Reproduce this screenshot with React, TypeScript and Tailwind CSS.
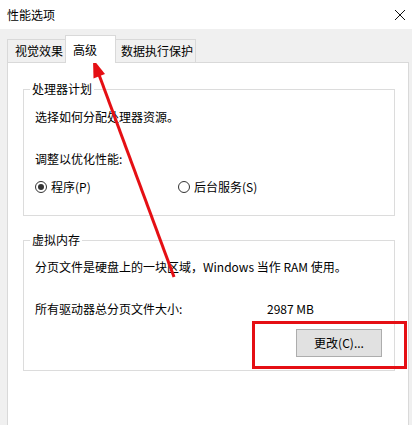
import React from "react";

const font = { fontFamily: '"Microsoft YaHei UI", "Noto Sans CJK SC", "Noto Sans", sans-serif' };

function Radio({ checked, label }: { checked?: boolean; label: string }) {
  return (
    <div className="flex items-center h-[16px]">
      <span className="w-[12px] h-[12px] rounded-full border border-[#333333] bg-white flex items-center justify-center">
        {checked && <span className="w-[6px] h-[6px] rounded-full bg-[#333333]" />}
      </span>
      <span className="ml-[4px]">{label}</span>
    </div>
  );
}

export default function App() {
  return (
    <div
      className="relative w-[412px] h-[425px] overflow-hidden bg-[#f0f0f0] text-[12px] leading-[16px] text-[#000000]"
      style={font}
    >
      {/* Title bar */}
      <div className="h-[29px] bg-white flex items-center justify-between pl-[7px] pr-[5px]">
        <span className="text-[12px]">性能选项</span>
        <svg width="12" height="12" viewBox="0 0 12 12" className="mr-[1px]">
          <path d="M1 1 L11 11 M11 1 L1 11" stroke="#111" strokeWidth="1" />
        </svg>
      </div>

      {/* Tabs */}
      <div className="flex items-end h-[33px] pl-[7px]">
        <div className="w-[59px] h-[23px] border border-b-0 border-[#d9d9d9] bg-[#f0f0f0] flex items-center pl-[7px] mb-0">
          视觉效果
        </div>
        <div className="relative z-10 -mb-[1px] w-[51px] h-[28px] border border-b-0 border-[#d9d9d9] bg-white flex items-start pt-[6px] pl-[7px] -ml-[1px]">
          高级
        </div>
        <div className="w-[80px] h-[23px] border border-b-0 border-l-0 border-[#d9d9d9] bg-[#f0f0f0] flex items-center pl-[5px]">
          数据执行保护
        </div>
      </div>

      {/* Panel */}
      <div className="ml-[7px] w-[402px] h-[400px] border border-[#d9d9d9] bg-white pt-[26px] pl-[15px]">
        {/* Group 1 */}
        <div className="relative w-[372px] h-[127px] border border-[#dcdcdc] pl-[11px] pt-[19px]">
          <span className="absolute -top-[9px] left-[6px] px-[2px] bg-white">处理器计划</span>
          <div>选择如何分配处理器资源。</div>
          <div className="mt-[26px]">调整以优化性能:</div>
          <div className="mt-[12px] flex">
            <div className="w-[143px]">
              <Radio checked label="程序(P)" />
            </div>
            <Radio label="后台服务(S)" />
          </div>
        </div>

        {/* Group 2 */}
        <div className="relative mt-[24px] w-[372px] h-[131px] border border-[#dcdcdc] pl-[11px] pt-[18px] pr-[12px]">
          <span className="absolute -top-[9px] left-[6px] px-[2px] bg-white">虚拟内存</span>
          <div>分页文件是硬盘上的一块区域，Windows 当作 RAM 使用。</div>
          <div className="mt-[26px] flex">
            <span className="w-[232px]">所有驱动器总分页文件大小:</span>
            <span>2987 MB</span>
          </div>
          <div className="mt-[12px] flex justify-end">
            <button className="w-[86px] h-[28px] bg-[#e1e1e1] border border-[#adadad] text-[12px] flex items-center justify-center" style={font}>
              更改(C)...
            </button>
          </div>
        </div>
      </div>

      {/* Annotation: red rectangle */}
      <div className="absolute left-[252px] top-[321px] w-[155px] h-[48px] border-[3px] border-[#e50f14]" />

      {/* Annotation: red arrow */}
      <svg className="absolute left-0 top-0" width="412" height="425" viewBox="0 0 412 425">
        <line x1="174" y1="277" x2="98" y2="72" stroke="#e50f14" strokeWidth="3" />
        <polygon points="93,59 105,74 93.5,78.5" fill="#e50f14" />
      </svg>
    </div>
  );
}
